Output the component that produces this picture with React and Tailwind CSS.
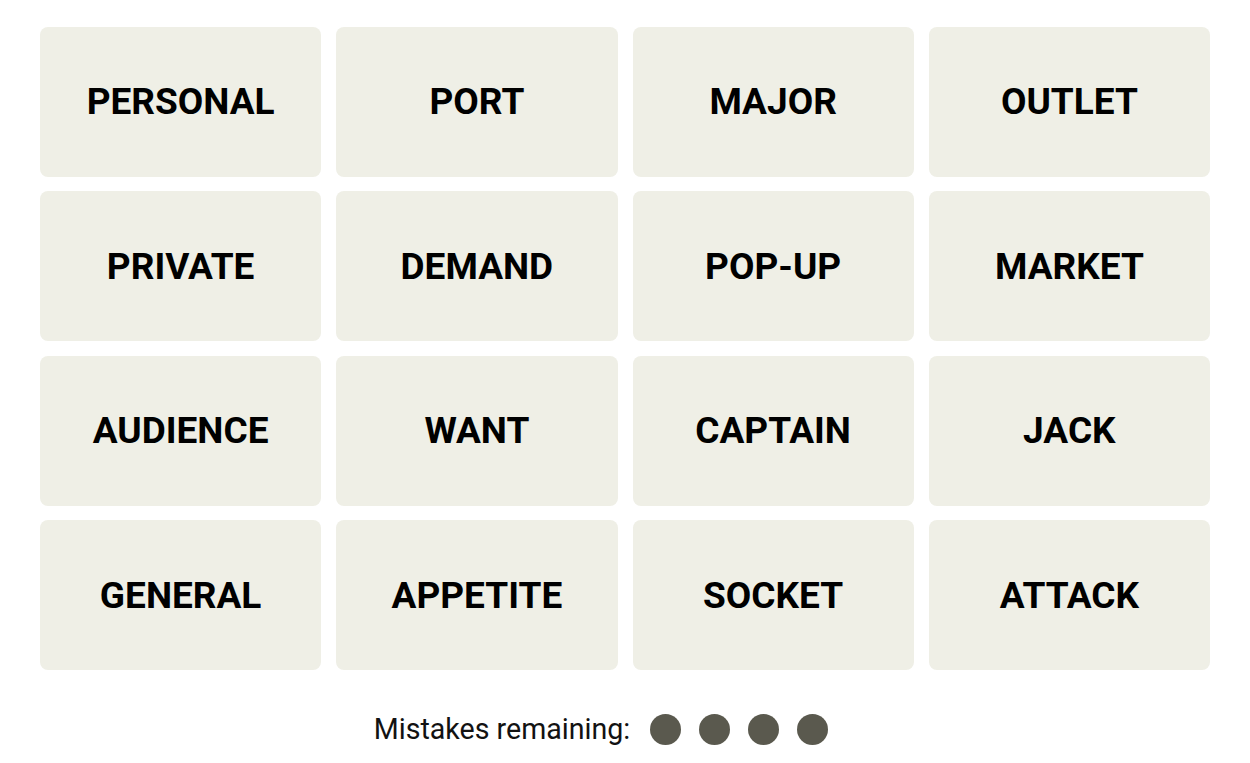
import React from "react";

const words = [
  "PERSONAL", "PORT", "MAJOR", "OUTLET",
  "PRIVATE", "DEMAND", "POP-UP", "MARKET",
  "AUDIENCE", "WANT", "CAPTAIN", "JACK",
  "GENERAL", "APPETITE", "SOCKET", "ATTACK",
];

export default function App() {
  return (
    <div className="w-[1250px] h-[763px] bg-white px-[40px] pt-[27px] flex flex-col" style={{ fontFamily: "Roboto, 'Liberation Sans', sans-serif" }}>
      <div className="grid grid-cols-4 gap-x-[15px] gap-y-[14.7px]">
        {words.map((w) => (
          <div key={w} className="h-[149.8px] rounded-[8px] bg-[#efefe6] flex items-center justify-center">
            <span className="text-[37px] font-bold text-black uppercase">{w}</span>
          </div>
        ))}
      </div>
      <div className="flex items-center justify-center mt-[38px] gap-[20px] pr-[48px]">
        <span className="text-[28.6px] text-[#121212] font-normal">Mistakes remaining:</span>
        <div className="flex gap-[18px]">
          {[0, 1, 2, 3].map((i) => (
            <span key={i} className="w-[31px] h-[31px] rounded-full bg-[#5a594e]" />
          ))}
        </div>
      </div>
    </div>
  );
}
